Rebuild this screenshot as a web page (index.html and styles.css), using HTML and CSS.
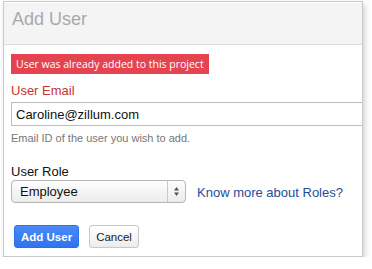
FILE: index.html
```html
<!DOCTYPE html>
<html lang="en">

<head>
    <meta charset="UTF-8">
    <title>Add User</title>
    <link rel="stylesheet" href="styles.css">
</head>

<body>
    <div class="panel">
        <div class="panel-header">Add User</div>
        <div class="panel-body">
            <div class="error">User was already added to this project</div>

            <label class="field-label invalid" for="email">User Email</label>
            <input type="text" id="email" class="text-input" value="Caroline@zillum.com">
            <p class="hint">Email ID of the user you wish to add.</p>

            <label class="field-label role-label" for="role">User Role</label>
            <div class="role-row">
                <div class="select">
                    <span class="select-value">Employee</span>
                    <span class="select-arrows">
                        <svg width="7" height="11" viewBox="0 0 7 11">
                            <path d="M3.5 1 L6 4.5 H1 Z" fill="#555" />
                            <path d="M3.5 10 L6 6.5 H1 Z" fill="#555" />
                        </svg>
                    </span>
                </div>
                <a href="#" class="roles-link">Know more about Roles?</a>
            </div>

            <div class="actions">
                <button class="btn btn-primary">Add User</button>
                <button class="btn">Cancel</button>
            </div>
        </div>
    </div>
</body>

</html>
```

FILE: styles.css
```css
* {
    margin: 0;
    padding: 0;
    box-sizing: border-box;
}

body {
    font-family: 'Liberation Sans', Arial, sans-serif;
    background: #ffffff;
}

/* Dialog panel */
.panel {
    margin: 1px 0 0 3px;
    width: 360px;
    height: 256px;
    border: 1px solid #c9c9c9;
    background: #ffffff;
    box-shadow: 2px 3px 6px rgba(0, 0, 0, 0.18);
    overflow: hidden;
}

.panel-header {
    height: 42px;
    margin-top: 1px;
    padding-left: 8px;
    background: #f4f4f4;
    border-bottom: 1px solid #dddddd;
    color: #a9a9a9;
    font-size: 18px;
    line-height: 33px;
}

.panel-body {
    padding: 9px 0 0 7px;
}

.error {
    display: inline-block;
    height: 20px;
    padding: 0 5px;
    background: #e4434f;
    color: #ffffff;
    font-family: 'Open Sans', sans-serif;
    font-size: 10.5px;
    line-height: 20px;
}

.field-label {
    display: block;
    margin-top: 7px;
    font-size: 13px;
    line-height: 20px;
    color: #111111;
}

.field-label.invalid {
    color: #c8332d;
}

.text-input {
    display: block;
    margin-top: 1px;
    width: 360px;
    height: 24px;
    padding: 0 4px;
    border: 1px solid #bdbdbd;
    font-family: inherit;
    font-size: 13px;
    color: #111111;
    outline: none;
}

.hint {
    margin-top: 5px;
    font-size: 11px;
    line-height: 14px;
    color: #777777;
}

.role-label {
    margin-top: 19px;
    line-height: 16px;
}

.role-row {
    display: flex;
    align-items: center;
    gap: 11px;
}

.select {
    display: flex;
    align-items: center;
    width: 175px;
    height: 23px;
    border: 1px solid #b5b5b5;
    border-radius: 4px;
    background: linear-gradient(to bottom, #fdfdfd, #ececec);
    font-size: 13px;
    color: #111111;
}

.select-value {
    flex: 1;
    padding-left: 8px;
}

.select-arrows {
    display: flex;
    align-items: center;
    justify-content: center;
    width: 18px;
    height: 100%;
    border-left: 1px solid #c9c9c9;
}

.roles-link {
    color: #1b4d9b;
    font-size: 13px;
    text-decoration: none;
    margin-top: 2px;
}

.actions {
    display: flex;
    gap: 10px;
    margin-top: 22px;
    padding-left: 3px;
}

.btn {
    height: 23px;
    padding: 0 6px;
    border: 1px solid #c8c8c8;
    border-radius: 3px;
    background: linear-gradient(to bottom, #ffffff, #ececec);
    color: #222222;
    font-family: inherit;
    font-size: 11.5px;
}

.btn-primary {
    border-color: #2d6fe6;
    background: linear-gradient(to bottom, #4a8af7, #2f73f0);
    color: #ffffff;
    font-weight: bold;
}
```
